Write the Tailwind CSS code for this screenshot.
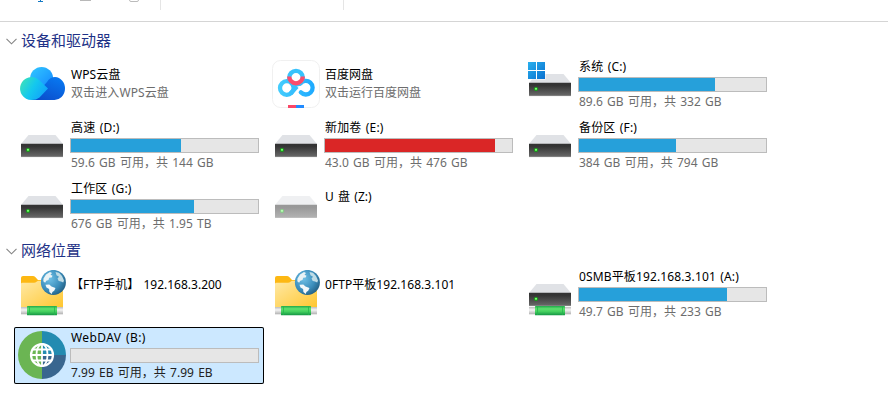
<!DOCTYPE html>
<html lang="zh-CN">
<head>
<meta charset="utf-8">
<title>此电脑</title>
<script src="https://cdn.jsdelivr.net/npm/@tailwindcss/browser@4"></script>
</head>
<body class="bg-white w-[888px] h-[406px] overflow-hidden font-['Noto_Sans','Noto_Sans_CJK_SC',sans-serif] text-xs text-black">

<!-- Shared icon artwork -->
<svg class="absolute w-0 h-0" aria-hidden="true">
  <defs>
    <linearGradient id="body" x1="0" y1="0" x2="0" y2="1"><stop offset="0" stop-color="#333"/><stop offset=".2" stop-color="#353535"/><stop offset="1" stop-color="#6a6a6a"/></linearGradient>
    <linearGradient id="pipe" x1="0" y1="0" x2="0" y2="1"><stop offset="0" stop-color="#20a94a"/><stop offset=".3" stop-color="#5fe070"/><stop offset=".6" stop-color="#43cf5e"/><stop offset="1" stop-color="#129443"/></linearGradient>
    <linearGradient id="cap" x1="0" y1="0" x2="0" y2="1"><stop offset="0" stop-color="#bdbdbd"/><stop offset=".4" stop-color="#f4f4f4"/><stop offset="1" stop-color="#b0b0b0"/></linearGradient>
    <linearGradient id="fold" x1="0" y1="0" x2="1" y2="1"><stop offset="0" stop-color="#ffe9a6"/><stop offset="1" stop-color="#ffc62e"/></linearGradient>
    <radialGradient id="sea" cx=".35" cy=".35" r=".75"><stop offset="0" stop-color="#6fc0e6"/><stop offset=".6" stop-color="#3b8dbb"/><stop offset="1" stop-color="#205a7d"/></radialGradient>
    <linearGradient id="win" x1="0" y1="0" x2="1" y2="1"><stop offset="0" stop-color="#28b0ee"/><stop offset="1" stop-color="#0a70cf"/></linearGradient>
    <linearGradient id="wtop" x1="0" y1="0" x2="1" y2="1"><stop offset="0" stop-color="#32c8ff"/><stop offset="1" stop-color="#1385ff"/></linearGradient>
    <linearGradient id="wleft" x1="0" y1="0" x2="1" y2=".5"><stop offset="0" stop-color="#43e6b0"/><stop offset=".55" stop-color="#14c8ee"/><stop offset="1" stop-color="#12a5fa"/></linearGradient>
    <linearGradient id="wright" x1="0" y1="1" x2=".6" y2="0"><stop offset="0" stop-color="#0b48c8"/><stop offset="1" stop-color="#0875ee"/></linearGradient>
    <linearGradient id="bd" gradientUnits="userSpaceOnUse" x1="6" y1="0" x2="42" y2="0"><stop offset="0" stop-color="#45cdfc"/><stop offset="1" stop-color="#1eaaff"/></linearGradient>
    <symbol id="drive" viewBox="0 0 48 48">
      <path d="M10.500 14h27L45 23H3z" fill="#e0e2e6"/>
      <rect x="3" y="22.700" width="42" height="13.300" rx=".4" fill="url(#body)"/>
      <path d="M3 35.600h42" stroke="#888" stroke-width=".8"/>
      <circle cx="10" cy="29" r="2" fill="#11a514"/><circle cx="10" cy="28.800" r="1.100" fill="#7dfd72"/>
    </symbol>
    <symbol id="cable" viewBox="0 0 48 48">
      <rect x="3" y="37" width="42" height="7.300" fill="url(#cap)"/>
      <rect x="9" y="36" width="30" height="9.300" rx=".6" fill="url(#pipe)"/>
      <path d="M11.500 36.300v8.700M36.500 36.300v8.700" stroke="#25b64d" stroke-width=".8"/>
    </symbol>
    <symbol id="ftp" viewBox="0 0 48 48">
      <path d="M3 8q0-2 2-2h10q1.200 0 2 .8l3 3.200h23q2 0 2 2v10H3z" fill="#fdb813"/>
      <path d="M3 14q0-1.300 1.300-1.300H16q1.500 0 2.500-1l1.500-1h23q2 0 2 2V38H3z" fill="url(#fold)"/>
      <circle cx="35.400" cy="12.400" r="12.500" fill="url(#sea)"/>
      <path d="M25.500 8.500l2.500-4 4-2.500 2 1-1.500 1.700 2 1-.8 1.800-2.500.3-.7 2.300-2.200.6-1.200 2-1.800-1.500z" fill="#e9f3f6"/>
      <path d="M27.500 14.700l3.800-.3 2.200 2 4 1.500-1.300 2.800-1.800 1.300-.7 2-2.300-2-.3-3-2.600-1.500z" fill="#f3f8fa"/>
      <path d="M37.500 2l3.500.8 3 3.200 2 4.500-.8 2-2.200-1-2.300-.6-1.200-2.400 1.500-1.800-2.500-1.500z" fill="#bfdce6"/>
      <use href="#cable" width="48" height="48"/>
    </symbol>
  </defs>
</svg>

<!-- Bottom edge of the command bar -->
<header class="flex items-start h-[22px] border-b border-[#d5d5d5]">
  <svg class="w-[160px] h-[10px]" viewBox="0 0 160 10" fill="none"><path d="M40.500 0v1.500M38 1.500h5" stroke="#1379c4"/><path d="M80 0.500h11" stroke="#b8b8b8"/><path d="M129.500 0q0 1.500 1.500 1.500h6q1.500 0 1.500-1.500" stroke="#bbb"/></svg>
  <div class="w-px h-[10px] bg-[#e5e5e5]"></div>
  <div class="w-px h-[10px] bg-[#e5e5e5] ml-[182px]"></div>
</header>

<main class="pt-1">
  <section>
    <h2 class="flex items-center h-[30px] pl-1.5 gap-1 text-[15px] text-[#1e3287]">
      <svg class="w-[11px] h-[7px]" viewBox="0 0 11 7" fill="none" stroke="#858585" stroke-width="1.100"><path d="M.5 .8l5 5 5-5"/></svg>
      <span class="leading-5 pb-0.5">设备和驱动器</span>
    </h2>
    <div class="grid grid-cols-[repeat(3,250px)] auto-rows-[57px] gap-1 pl-3.5 whitespace-nowrap">
      <div class="flex items-start pt-1 pl-1">
        <svg class="w-12 h-12 shrink-0" viewBox="0 0 48 48">
          <circle cx="23.600" cy="18.500" r="11.500" fill="url(#wtop)"/>
          <path d="M13 40l16-18q3-5 8-5a10.500 11.500 0 0 1-1 23z" fill="url(#wright)"/>
          <path d="M13.300 40a11.400 11.500 0 1 1 7.500-20.300L30 28.500l-8.500 9q-3 2.500-8.200 2.500z" fill="url(#wleft)"/>
        </svg>
        <div class="pl-[5px] pt-1.5 leading-[18px] tracking-[0.1px]"><p>WPS云盘</p><p class="text-[#6d6d6d]">双击进入WPS云盘</p></div>
      </div>
      <div class="flex items-start pt-1 pl-1">
        <svg class="w-12 h-12 shrink-0" viewBox="0 0 48 48" fill="none">
          <rect x=".5" y=".5" width="47" height="47" rx="8" fill="#fff" stroke="#f0f0f0"/>
          <circle cx="14.800" cy="28" r="6.800" stroke="url(#bd)" stroke-width="4.300"/>
          <path d="M18.500 33.500L25 26.500" stroke="#36bffd" stroke-width="4.300"/>
          <path d="M21 25.500l3.500-1.500 4-.5a6.800 6.800 0 1 1 .3 8.800" stroke="url(#bd)" stroke-width="4.300" stroke-linecap="round" stroke-linejoin="round"/>
          <circle cx="24" cy="17.700" r="6.800" stroke="#38c2fc" stroke-width="4.300"/>
          <path d="M17.200 16.500a6.800 6.800 0 1 0 13.600 0" stroke="#fb4c6c" stroke-width="4.300"/>
          <path d="M16 45h8v3h-8z" fill="#fa4767"/><path d="M24 45h8v3h-8z" fill="#218bff"/>
        </svg>
        <div class="pl-[5px] pt-1.5 leading-[18px]"><p>百度网盘</p><p class="text-[#6d6d6d]">双击运行百度网盘</p></div>
      </div>
      <div class="flex items-start pl-1">
        <svg class="w-12 h-12 mt-1 shrink-0" viewBox="0 0 48 48"><use href="#drive"/><path d="M1.500 1.500h18v18h-18z" fill="#fff"/><path d="M2 2h8v8H2zM11 2h8v8h-8zM2 11h8v8H2zM11 11h8v8h-8z" fill="url(#win)"/></svg>
        <div class="pl-1 [word-spacing:1.15px]"><p class="pl-px h-[21px] leading-[21px] tracking-[0.15px]">系统 (C:)</p><div class="w-[189px] h-[15px] border border-[#bcbcbc] bg-[#e6e6e6]"><div class="h-full bg-[#26a0da]" style="width:136px"></div></div><p class="pl-px leading-[19px] text-[#6d6d6d]">89.6 GB 可用，共 332 GB</p></div>
      </div>
      <div class="flex items-start pl-1">
        <svg class="w-12 h-12 mt-1 shrink-0"><use href="#drive"/></svg>
        <div class="pl-1 [word-spacing:1.15px]"><p class="pl-px h-[21px] leading-[21px] tracking-[0.15px]">高速 (D:)</p><div class="w-[189px] h-[15px] border border-[#bcbcbc] bg-[#e6e6e6]"><div class="h-full bg-[#26a0da]" style="width:110px"></div></div><p class="pl-px leading-[19px] text-[#6d6d6d]">59.6 GB 可用，共 144 GB</p></div>
      </div>
      <div class="flex items-start pl-1">
        <svg class="w-12 h-12 mt-1 shrink-0"><use href="#drive"/></svg>
        <div class="pl-1 [word-spacing:1.15px]"><p class="pl-px h-[21px] leading-[21px] tracking-[0.15px]">新加卷 (E:)</p><div class="w-[189px] h-[15px] border border-[#bcbcbc] bg-[#e6e6e6]"><div class="h-full bg-[#da2626]" style="width:170px"></div></div><p class="pl-px leading-[19px] text-[#6d6d6d]">43.0 GB 可用，共 476 GB</p></div>
      </div>
      <div class="flex items-start pl-1">
        <svg class="w-12 h-12 mt-1 shrink-0"><use href="#drive"/></svg>
        <div class="pl-1 [word-spacing:1.15px]"><p class="pl-px h-[21px] leading-[21px] tracking-[0.15px]">备份区 (F:)</p><div class="w-[189px] h-[15px] border border-[#bcbcbc] bg-[#e6e6e6]"><div class="h-full bg-[#26a0da]" style="width:97px"></div></div><p class="pl-px leading-[19px] text-[#6d6d6d]">384 GB 可用，共 794 GB</p></div>
      </div>
      <div class="flex items-start pl-1">
        <svg class="w-12 h-12 mt-1 shrink-0"><use href="#drive"/></svg>
        <div class="pl-1 [word-spacing:1.15px]"><p class="pl-px h-[21px] leading-[21px] tracking-[0.15px]">工作区 (G:)</p><div class="w-[189px] h-[15px] border border-[#bcbcbc] bg-[#e6e6e6]"><div class="h-full bg-[#26a0da]" style="width:123px"></div></div><p class="pl-px leading-[19px] text-[#6d6d6d]">676 GB 可用，共 1.95 TB</p></div>
      </div>
      <div class="flex items-start pt-1 pl-1">
        <svg class="w-12 h-12 shrink-0 opacity-50"><use href="#drive"/></svg>
        <p class="pl-[5px] pt-1.5 leading-[18px] [word-spacing:1.15px]">U 盘 (Z:)</p>
      </div>
    </div>
  </section>

  <section class="pt-px">
    <h2 class="flex items-center h-[30px] pl-1.5 gap-1 text-[15px] text-[#1e3287]">
      <svg class="w-[11px] h-[7px]" viewBox="0 0 11 7" fill="none" stroke="#858585" stroke-width="1.100"><path d="M.5 .8l5 5 5-5"/></svg>
      <span class="leading-5 pb-0.5">网络位置</span>
    </h2>
    <div class="grid grid-cols-[repeat(3,250px)] auto-rows-[57px] gap-1 pl-3.5 whitespace-nowrap">
      <div class="flex items-start pt-1 pl-1">
        <svg class="w-12 h-12 shrink-0"><use href="#ftp"/></svg>
        <p class="pl-[5px] pt-1.5 leading-[18px] [word-spacing:1.15px]">【FTP手机】 192.168.3.200</p>
      </div>
      <div class="flex items-start pt-1 pl-1">
        <svg class="w-12 h-12 shrink-0"><use href="#ftp"/></svg>
        <p class="pl-[5px] pt-1.5 leading-[18px] tracking-[0.05px]">0FTP平板192.168.3.101</p>
      </div>
      <div class="flex items-start pl-1">
        <svg class="w-12 h-12 mt-1 shrink-0"><use href="#drive"/><use href="#cable"/></svg>
        <div class="pl-1 [word-spacing:1.15px]"><p class="pl-px h-[21px] leading-[21px] tracking-[0.13px]">0SMB平板192.168.3.101 (A:)</p><div class="w-[189px] h-[15px] border border-[#bcbcbc] bg-[#e6e6e6]"><div class="h-full bg-[#26a0da]" style="width:148px"></div></div><p class="pl-px leading-[19px] text-[#6d6d6d]">49.7 GB 可用，共 233 GB</p></div>
      </div>
      <div class="flex items-start pl-1 bg-[#cce8ff] rounded-[2px] ring-1 ring-inset ring-black">
        <svg class="w-12 h-12 mt-1 shrink-0" viewBox="0 0 48 48" fill="none">
          <path d="M24 0a24 24 0 0 0 0 48z" fill="#6bb553"/><path d="M24 0a24 24 0 0 1 24 24H24z" fill="#238bb1"/><path d="M48 24a24 24 0 0 1-24 24V24z" fill="#39668f"/>
          <g stroke="#fff" stroke-width="1.800"><circle cx="24" cy="24" r="11" stroke-width="2.200"/><ellipse cx="24" cy="24" rx="5.500" ry="11"/><path d="M24 13v22M13 24h22M14.500 18.500h19M14.500 29.500h19"/></g>
        </svg>
        <div class="pl-1 [word-spacing:1.15px]"><p class="pl-px h-[21px] leading-[21px] tracking-[0.4px]">WebDAV (B:)</p><div class="w-[189px] h-[15px] border border-[#bcbcbc] bg-[#e6e6e6]"></div><p class="pl-px leading-[19px] text-[#222]">7.99 EB 可用，共 7.99 EB</p></div>
      </div>
    </div>
  </section>
</main>
</body>
</html>
